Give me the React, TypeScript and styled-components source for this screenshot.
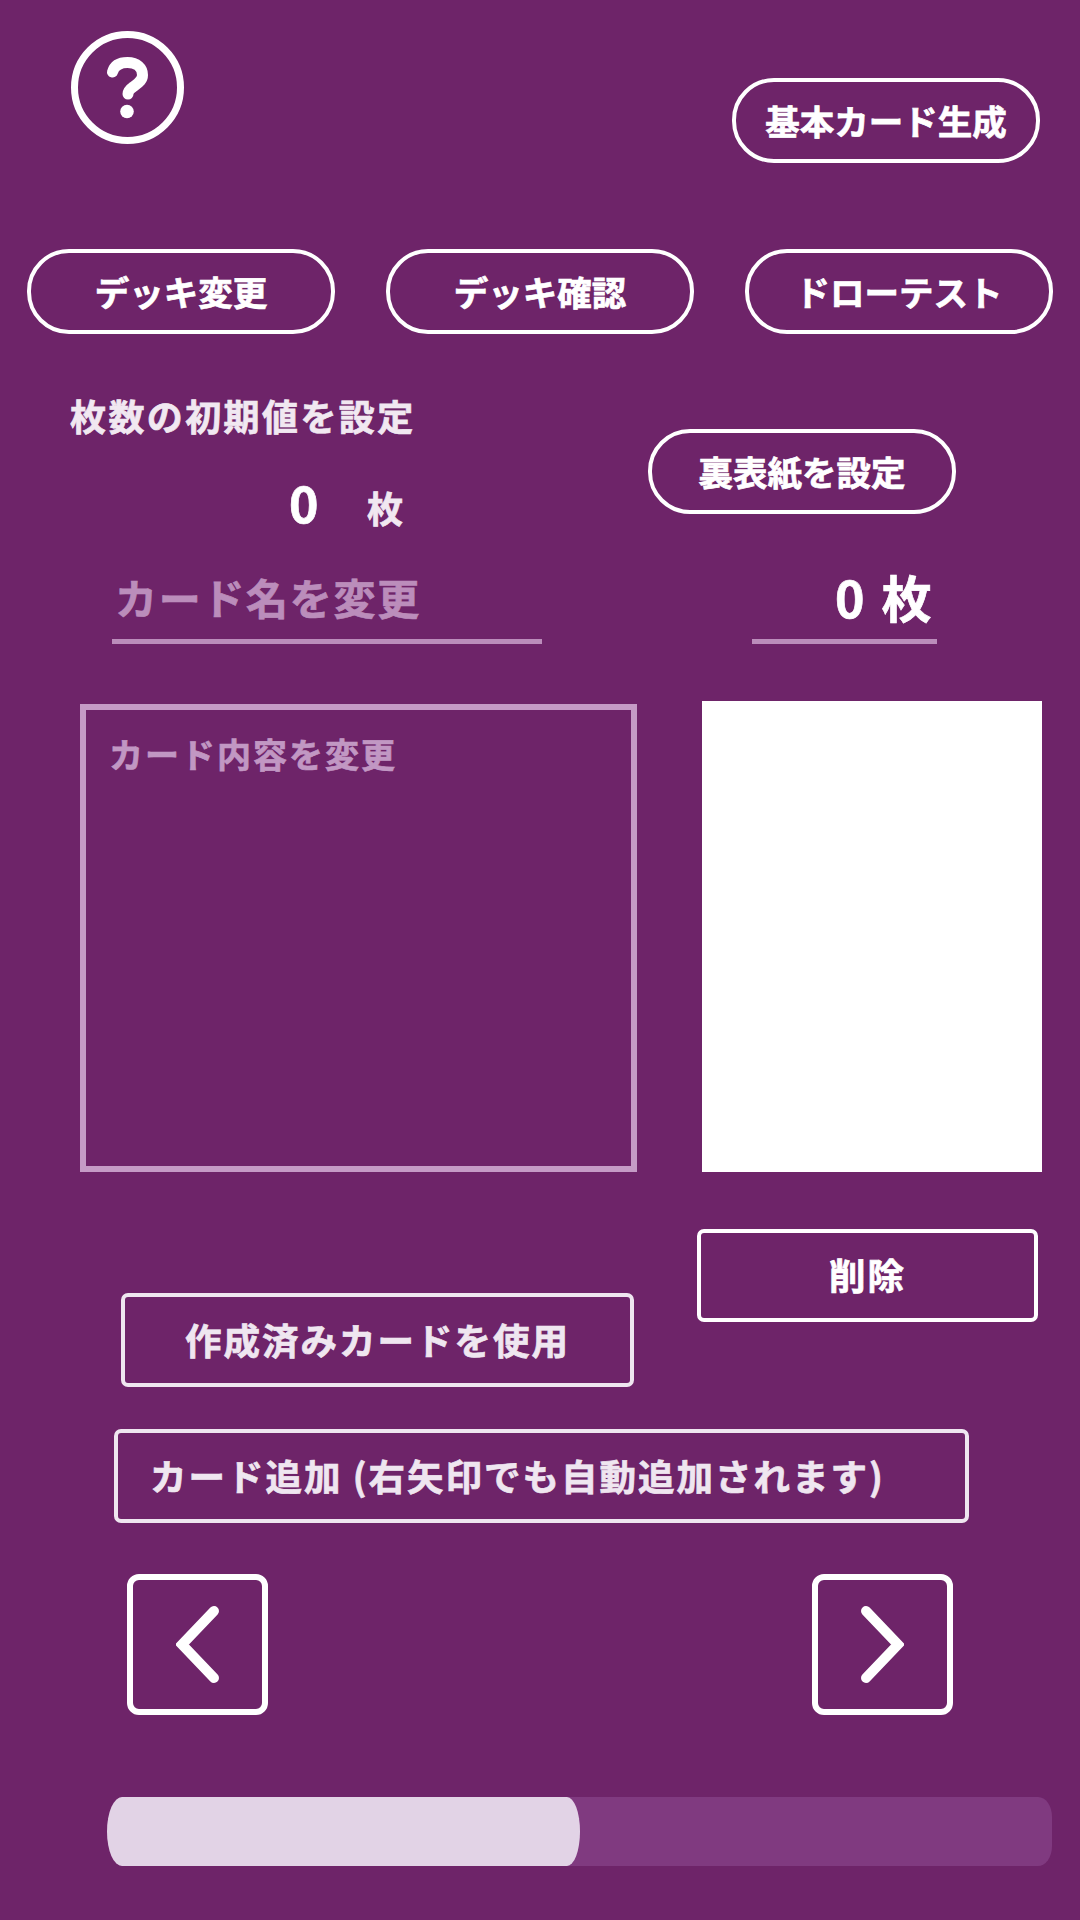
import React from "react";
import styled, { createGlobalStyle } from "styled-components";

const Global = createGlobalStyle`
  html, body { margin: 0; padding: 0; background: #6e2469; }
  * { box-sizing: border-box; }
  body { font-family: "Noto Sans CJK JP", "Noto Sans", sans-serif; color: #fff; }
`;

const Page = styled.div`
  width: 1080px;
  height: 1920px;
  padding-top: 31px;
  background: #6e2469;
  overflow: hidden;
  font-weight: 700;
  -webkit-text-stroke: 0.7px currentColor;
`;

const TopRow = styled.div`
  display: flex;
  align-items: flex-start;
  justify-content: space-between;
  padding: 0 40px 0 71px;
`;

const HelpButton = styled.div`
  width: 113px;
  height: 113px;
  display: flex;
  align-items: center;
  justify-content: center;
`;

const Pill = styled.div<{ $top?: number }>`
  width: 308px;
  height: 85px;
  margin-top: ${(p) => p.$top ?? 0}px;
  flex: none;
  display: flex;
  align-items: center;
  justify-content: center;
  border: 4px solid #fff;
  border-radius: 42px;
  font-size: 34.5px;
  line-height: 1;
`;

const DeckRow = styled.div`
  display: flex;
  gap: 51px;
  padding-left: 27px;
  margin-top: 86px;
`;

const SettingsRow = styled.div`
  display: flex;
  height: 238px;
`;

const InitialColumn = styled.div`
  width: 648px;
  flex: none;
  padding: 57px 0 0 70px;
`;

const InitialLabel = styled.div`
  font-size: 36px;
  letter-spacing: 2.4px;
  line-height: 48px;
  color: #f1e8f1;
  white-space: nowrap;
`;

const InitialValue = styled.div`
  display: flex;
  align-items: baseline;
  padding: 32px 0 0 219px;
  line-height: 60px;
`;

const InitialNumber = styled.span`
  font-size: 50px;
  width: 78px;
`;

const InitialUnit = styled.span`
  font-size: 36px;
  color: #f1e8f1;
`;

const NameRow = styled.div`
  display: flex;
  height: 72px;
  padding-left: 112px;
`;

const NameField = styled.div`
  width: 430px;
  border-bottom: 5px solid #bb8dbb;
  padding-left: 3px;
  font-size: 42px;
  letter-spacing: 1.7px;
  line-height: 50px;
  color: #bb8dbb;
  white-space: nowrap;
`;

const CountField = styled.div`
  width: 185px;
  margin-left: 210px;
  border-bottom: 5px solid #bb8dbb;
  padding-left: 83px;
  line-height: 48px;
  white-space: nowrap;
`;

const CountNumber = styled.span`
  font-size: 50px;
  margin-right: 17px;
`;

const CountUnit = styled.span`
  font-size: 50px;
`;

const EditorRow = styled.div`
  display: flex;
  margin-top: 57px;
  padding-left: 80px;
`;

const ContentField = styled.div`
  width: 557px;
  height: 468px;
  margin-top: 3px;
  border: 6px solid #c59bc6;
  padding: 22px 23px;
  font-size: 34px;
  letter-spacing: 2px;
  line-height: 44px;
  color: #c197c3;
  white-space: nowrap;
`;

const Preview = styled.div`
  width: 340px;
  height: 471px;
  margin-left: 65px;
  background: #fff;
`;

const ActionRow = styled.div<{ $top: number; $left: number }>`
  display: flex;
  margin-top: ${(p) => p.$top}px;
  padding-left: ${(p) => p.$left}px;
  align-items: flex-start;
`;

const SquareButton = styled.div<{ $width: number; $height?: number; $top?: number; $left?: number; $start?: boolean; $soft?: boolean }>`
  width: ${(p) => p.$width}px;
  height: ${(p) => p.$height ?? 94}px;
  flex: none;
  margin-top: ${(p) => p.$top ?? 0}px;
  margin-left: ${(p) => p.$left ?? 0}px;
  display: flex;
  align-items: center;
  justify-content: ${(p) => (p.$start ? "flex-start" : "center")};
  padding-left: ${(p) => (p.$start ? 32 : 0)}px;
  border: 4.5px solid ${(p) => (p.$soft ? "#efe6f0" : "#fff")};
  border-radius: 7px;
  font-size: 36.5px;
  letter-spacing: 2px;
  line-height: 1;
  color: ${(p) => (p.$soft ? "#efe6f0" : "#fff")};
  white-space: nowrap;
`;

const ArrowRow = styled.div`
  display: flex;
  gap: 544px;
  margin-top: 51px;
  padding-left: 127px;
`;

const ArrowButton = styled.div`
  width: 141px;
  height: 141px;
  display: flex;
  align-items: center;
  justify-content: center;
  border: 6.5px solid #fff;
  border-radius: 12px;
`;

const SliderTrack = styled.div`
  width: 945px;
  height: 69px;
  margin: 82px 0 0 107px;
  background: #803a80;
  border-radius: 15px 14px 14px 15px / 34.5px 20px 20px 34.5px;
`;

const SliderThumb = styled.div`
  height: 100%;
  background: #e2d3e6;
  border-radius: 15px 13px 13px 15px / 34.5px;
`;

const Chevron = ({ flip }: { flip?: boolean }) => (
  <svg width="43" height="77" viewBox="0 0 43 77" fill="none" stroke="#fff" strokeWidth="10" strokeLinecap="round" strokeLinejoin="miter">
    <path d={flip ? "M5 5 L37 38.5 L5 72" : "M38 5 L6 38.5 L38 72"} />
  </svg>
);

const HelpIcon = () => (
  <svg width="113" height="113" viewBox="0 0 113 113" fill="none" stroke="#fff">
    <circle cx="56.5" cy="56.5" r="53" strokeWidth="7" />
    <path d="M41.5 41 C43.5 34 49 31.5 56.5 31.5 C 66 31.5 71.5 37 71.5 44 C 71.5 50 66.5 52.5 62 56 C 58.5 58.5 57 60 57 63" strokeWidth="11" strokeLinecap="round" />
    <circle cx="56" cy="80.5" r="6.8" fill="#fff" stroke="none" />
  </svg>
);

export default function App() {
  return (
    <Page>
      <Global />
      <TopRow>
        <HelpButton><HelpIcon /></HelpButton>
        <Pill $top={47}>基本カード生成</Pill>
      </TopRow>
      <DeckRow>
        <Pill>デッキ変更</Pill>
        <Pill>デッキ確認</Pill>
        <Pill>ドローテスト</Pill>
      </DeckRow>
      <SettingsRow>
        <InitialColumn>
          <InitialLabel>枚数の初期値を設定</InitialLabel>
          <InitialValue>
            <InitialNumber>0</InitialNumber>
            <InitialUnit>枚</InitialUnit>
          </InitialValue>
        </InitialColumn>
        <Pill $top={95}>裏表紙を設定</Pill>
      </SettingsRow>
      <NameRow>
        <NameField>カード名を変更</NameField>
        <CountField>
          <CountNumber>0</CountNumber>
          <CountUnit>枚</CountUnit>
        </CountField>
      </NameRow>
      <EditorRow>
        <ContentField>カード内容を変更</ContentField>
        <Preview />
      </EditorRow>
      <ActionRow $top={57} $left={121}>
        <SquareButton $width={513} $top={64} $soft>作成済みカードを使用</SquareButton>
        <SquareButton $width={341} $height={93} $left={63}>削除</SquareButton>
      </ActionRow>
      <ActionRow $top={42} $left={114}>
        <SquareButton $width={855} $start $soft>カード追加 (右矢印でも自動追加されます)</SquareButton>
      </ActionRow>
      <ArrowRow>
        <ArrowButton><Chevron /></ArrowButton>
        <ArrowButton><Chevron flip /></ArrowButton>
      </ArrowRow>
      <SliderTrack>
        <SliderThumb style={{ width: "50%" }} />
      </SliderTrack>
    </Page>
  );
}
